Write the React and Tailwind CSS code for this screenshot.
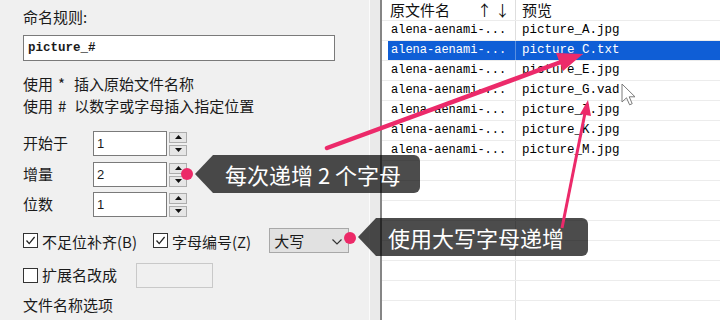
import React from 'react';

const files = [
    { src: 'alena-aenami-...', out: 'picture_A.jpg' },
    { src: 'alena-aenami-...', out: 'picture_C.txt', selected: true },
    { src: 'alena-aenami-...', out: 'picture_E.jpg' },
    { src: 'alena-aenami-...', out: 'picture_G.vad' },
    { src: 'alena-aenami-...', out: 'picture_I.jpg' },
    { src: 'alena-aenami-...', out: 'picture_K.jpg' },
    { src: 'alena-aenami-...', out: 'picture_M.jpg' },
    {}, {}, {}, {}, {}, {}, {}, {},
];

const Check = ({ checked }) => (
    <span className="w-[15px] h-[15px] border-[1.5px] border-[#333] bg-white flex items-center justify-center shrink-0">
        {checked && (
            <svg width="11" height="11" viewBox="0 0 11 11">
                <path d="M1.5 5.5 L4.2 8.6 L9.6 2" stroke="#222" strokeWidth="1.3" fill="none" />
            </svg>
        )}
    </span>
);

const Spin = () => (
    <div className="flex flex-col gap-[2px] ml-[2px]">
        <div className="w-[18px] h-[11px] bg-[#e6e6e6] border border-[#adadad] flex items-center justify-center">
            <svg width="7" height="4" viewBox="0 0 7 4"><path d="M0 4 L3.5 0 L7 4Z" fill="#111" /></svg>
        </div>
        <div className="w-[18px] h-[11px] bg-[#e6e6e6] border border-[#adadad] flex items-center justify-center">
            <svg width="7" height="4" viewBox="0 0 7 4"><path d="M0 0 L3.5 4 L7 0Z" fill="#111" /></svg>
        </div>
    </div>
);

const NumRow = ({ label, value, className }) => (
    <div className={`flex items-center h-[25px] ${className}`}>
        <span className="w-[70px]">{label}</span>
        <div className="w-[74px] h-[25px] border border-[#7a7a7a] bg-white pl-[3px] text-[13px] leading-[23px] font-['Liberation_Sans',sans-serif]">
            {value}
        </div>
        <Spin />
    </div>
);

const App = () => {
    return (
        <div className="relative w-[720px] h-[320px] overflow-hidden flex bg-white font-['Noto_Sans_CJK_SC','Noto_Sans',sans-serif] text-[#1a1a1a]">
            {/* Settings panel */}
            <div className="w-[370px] h-full bg-[#f0f0f0] border-r border-[#fbfbfb] pl-[23px] text-[15px]">
                <div className="pt-[8px] leading-[18px]">命名规则:</div>
                <div className="mt-[9px] w-[312px] h-[26px] border border-[#7a7a7a] bg-white pl-[4px] font-['Liberation_Mono',monospace] font-bold text-[12.5px] leading-[24px]">
                    picture_#
                </div>
                <div className="mt-[12px] leading-[22px]">
                    使用<span className="ml-[5px] mr-[9px]">*</span>插入原始文件名称
                </div>
                <div className="leading-[22px]">
                    使用<span className="ml-[5px] mr-[8px]">#</span>以数字或字母插入指定位置
                </div>
                <NumRow label="开始于" value="1" className="mt-[14px]" />
                <NumRow label="增量" value="2" className="mt-[6px]" />
                <NumRow label="位数" value="1" className="mt-[5px]" />

                <div className="mt-[11px] h-[25px] flex items-center">
                    <Check checked />
                    <span className="ml-[4px] mt-[3px]">不足位补齐(B)</span>
                    <span className="ml-[16px]"><Check checked /></span>
                    <span className="ml-[4px] mt-[3px]">字母编号(Z)</span>
                    <div className="ml-[18px] w-[80px] h-[25px] bg-[#e1e1e1] border border-[#a8a8a8] pl-[4px] pr-[6px] flex items-center justify-between">
                        <span className="leading-[20px]">大写</span>
                        <svg width="10" height="6" viewBox="0 0 10 6" className="mt-[2px]">
                            <path d="M0.5 0.5 L5 5 L9.5 0.5" stroke="#333" strokeWidth="1.2" fill="none" />
                        </svg>
                    </div>
                </div>

                <div className="mt-[10px] h-[25px] flex items-center">
                    <Check />
                    <span className="ml-[4px]">扩展名改成</span>
                    <div className="ml-[19px] w-[77px] h-[25px] border border-[#c9c9c9] bg-[#f0f0f0]" />
                </div>

                <div className="mt-[6px] leading-[22px]">文件名称选项</div>
            </div>

            <div className="w-[10px] h-full bg-[#eaeaea]" />
            <div className="w-[2px] h-full bg-[#858585]" />

            {/* File list */}
            <div className="flex-1 h-full bg-white">
                <div className="h-[21px] flex border-b border-[#ececec] text-[15px] leading-[19px] text-[#111]">
                    <div className="w-[134px] border-r border-[#dedede] pl-[8px] flex">
                        <span>原文件名</span>
                        <span className="ml-[27px] tracking-[3px]">↑↓</span>
                    </div>
                    <div className="pl-[6px]">预览</div>
                </div>
                {files.map((f, i) => (
                    <div key={i} className="h-[20px] flex border-b border-[#ececec]">
                        <div className="w-[6px]" />
                        <div className={`flex-1 flex ${f.selected ? 'bg-[#0f5ed6] text-white' : 'text-black'} font-['Liberation_Mono',monospace] leading-[19px]`}>
                            <div className={`w-[128px] pl-[3px] text-[12px] border-r ${f.selected ? 'border-[#5a8fe0]' : 'border-[#dedede]'}`}>
                                {f.src}
                            </div>
                            <div className="pl-[6px] text-[12.5px]">{f.out}</div>
                        </div>
                    </div>
                ))}
            </div>

            {/* Annotations */}
            <div className="absolute left-[195px] top-[155px] w-[225px] h-[38px] bg-black/70 rounded-r-[6px] [clip-path:polygon(0_50%,18px_0,100%_0,100%_100%,18px_100%)] pl-[30px] text-white text-[22px] leading-[38px]">
                每次递增 2 个字母
            </div>
            <div className="absolute left-[358px] top-[218px] w-[230px] h-[38px] bg-black/70 rounded-r-[6px] [clip-path:polygon(0_50%,18px_0,100%_0,100%_100%,18px_100%)] pl-[30px] text-white text-[22px] leading-[38px]">
                使用大写字母递增
            </div>
            <span className="absolute left-[181px] top-[168px] w-[12px] h-[12px] rounded-full bg-[#ec2a68]" />
            <span className="absolute left-[344px] top-[232px] w-[12px] h-[12px] rounded-full bg-[#ec2a68]" />

            <svg className="absolute left-0 top-0 pointer-events-none" width="720" height="320" viewBox="0 0 720 320">
                <line x1="327" y1="148" x2="561" y2="62" stroke="#ec2a6a" strokeWidth="4.5" strokeLinecap="round" />
                <polygon points="583,54 563,71 556,53" fill="#ec2a6a" />
                <line x1="562" y1="228" x2="585" y2="113" stroke="#ec2a6a" strokeWidth="3" />
                <polygon points="588,100 591,116 580,114" fill="#ec2a6a" />
            </svg>

            <svg className="absolute left-[621px] top-[83px]" width="18" height="26" viewBox="0 0 18 26">
                <path d="M1 1 L1 19 L5.5 14.8 L8.6 21.8 L11.2 20.7 L8.2 13.8 L14 13.8 Z" fill="white" stroke="#7a7a7a" strokeWidth="1" strokeLinejoin="round" />
            </svg>
        </div>
    );
};

export default App;
